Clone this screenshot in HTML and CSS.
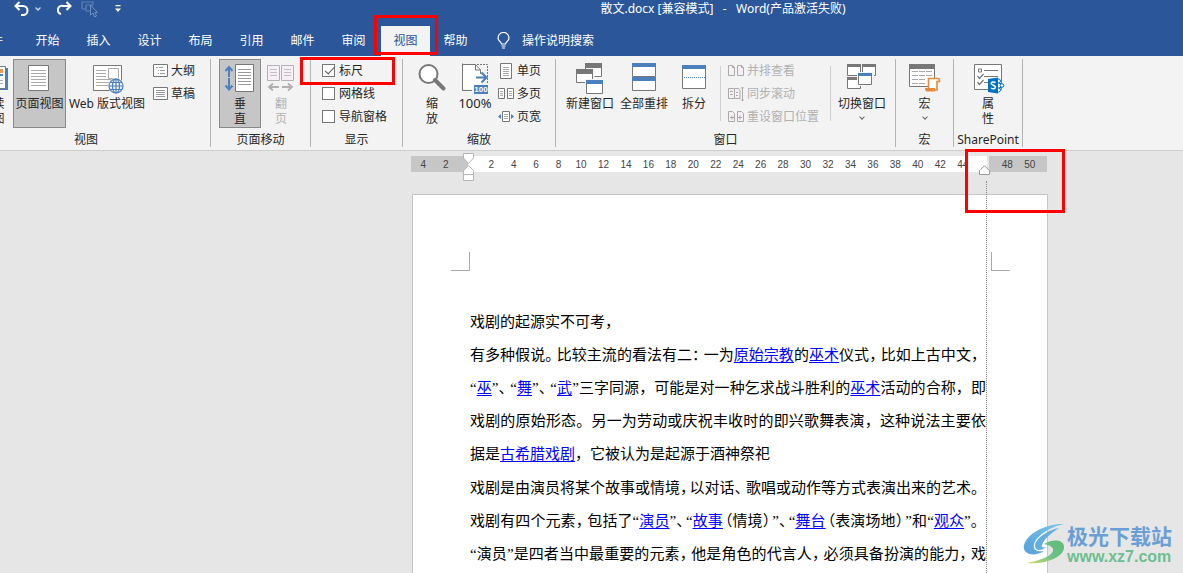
FILE: index.html
```html
<!DOCTYPE html>
<html lang="zh-CN">
<head>
<meta charset="utf-8">
<title>散文.docx - Word</title>
<link rel="stylesheet" href="styles.css">
</head>
<body>
<header class="titlebar">
  <div class="quick">
    <button class="qbtn" aria-label="撤消"><svg width="16" height="16" viewBox="0 0 16 16"><path d="M3 5h7a4 4 0 0 1 0 9H8M6.500 1 2.500 5l4 4" fill="none" stroke="#fff" stroke-width="2"/></svg></button>
    <button class="qbtn caret" aria-label="撤消列表"><svg width="6" height="4" viewBox="0 0 6 4"><path d="M.5.5 3 3 5.500.5" fill="none" stroke="#cdd9ec" stroke-width="1.300"/></svg></button>
    <button class="qbtn redo" aria-label="恢复"><svg width="16" height="16" viewBox="0 0 16 16"><path d="M13 5H6a4 4 0 0 0-2 8M9.500 1l4 4-4 4" fill="none" stroke="#fff" stroke-width="2"/></svg></button>
    <button class="qbtn select" aria-label="选择对象" disabled><svg width="17" height="18" viewBox="0 0 17 18"><path d="M1 9V2h11v3M1 9h4M5 5h7M5 5v6h4" fill="none" stroke="#5f82b8" stroke-width="1.200"/><path d="M9.500 5v10l2.500-2 1.500 4 2-1-1.500-3.500h2.500z" fill="#2b579a" stroke="#6f8fc0"/></svg></button>
    <button class="qbtn more" aria-label="自定义快速访问工具栏"><svg width="6" height="8" viewBox="0 0 6 8"><path d="M.5 0h5v1.200h-5zM0 3.500h6L3 7z" fill="#fff"/></svg></button>
  </div>
  <div class="title">散文.docx [兼容模式]&nbsp;&nbsp; -&nbsp;&nbsp; Word(产品激活失败)</div>
</header>
<nav class="tabs">
  <button class="tab file">文件</button>
  <button class="tab">开始</button>
  <button class="tab">插入</button>
  <button class="tab">设计</button>
  <button class="tab">布局</button>
  <button class="tab">引用</button>
  <button class="tab">邮件</button>
  <button class="tab">审阅</button>
  <div class="tab-wrap"><button class="tab active">视图</button><span class="mark mark-tab"></span></div>
  <button class="tab">帮助</button>
  <button class="tell"><svg width="13" height="17" viewBox="0 0 13 17"><path d="M4.500 12c0-2-3.500-3-3.500-6a5.300 5.300 0 0 1 11 0c0 3-3.500 4-3.500 6zM4.500 14h4M5 16h3" fill="none" stroke="#fff" stroke-width="1.200"/></svg><span>操作说明搜索</span></button>
</nav>

<section class="ribbon">
  <div class="group g-view">
    <div class="tools">
      <button class="big read"><svg width="32" height="32" viewBox="0 0 32 32"><path d="M8 4h23v22H8z" fill="#4a80bd"/><path d="M4.500 2.500h24v22h-24z" fill="#fff" stroke="#777"/><path d="M20 5h6v4h-6z" fill="#ed9b4e"/><path d="M20 10h6v2h-6z" fill="#4a80bd"/><path d="M7 7.500h10M7 10.500h10M7 13.500h10M7 16.500h19M7 19.500h19" stroke="#aaa"/></svg><span>阅读<br>视图</span></button>
      <button class="big page-view on"><svg width="31" height="32" viewBox="0 0 31 32"><path d="M4.500 1.500h20v25h-20z" fill="#fff" stroke="#777"/><path d="M7 6.500h15M7 9.500h15M7 12.500h15M7 15.500h15M7 18.500h15M7 21.500h15" stroke="#aaa"/></svg><span>页面视图</span></button>
      <button class="big web"><svg width="32" height="32" viewBox="0 0 32 32"><path d="M2.500 1.500h28v25h-28z" fill="#fff" stroke="#777"/><path d="M5 6.500h10M5 9.500h10M5 12.500h10M5 15.500h23M5 18.500h14M5 21.500h12" stroke="#aaa"/><path d="M17.500 4.500h10v10h-10z" fill="#fff" stroke="#aaa"/><circle cx="25" cy="22" r="8" fill="#f3f3f3"/><g fill="none" stroke="#4a80bd" stroke-width="1.200"><circle cx="25" cy="22" r="7"/><ellipse cx="25" cy="22" rx="3.500" ry="7"/><path d="M18 22h14M19 18.500h12M19 25.500h12M25 15v14"/></g></svg><span>Web 版式视图</span></button>
      <div class="smalls">
        <button class="small"><svg width="15" height="14" viewBox="0 0 15 14"><path d="M.5.500h14v12H.5z" fill="#fff" stroke="#777"/><path d="M3 3.500h2M6 3.500h4M5 6.500h1M7 6.500h5M5 9.500h1M7 9.500h5" stroke="#999"/></svg>大纲</button>
        <button class="small"><svg width="15" height="14" viewBox="0 0 15 14"><path d="M.5.500h14v12H.5z" fill="#fff" stroke="#777"/><path d="M3 3.500h9M3 5.500h9M3 7.500h9M3 9.500h9" stroke="#999"/></svg>草稿</button>
      </div>
    </div>
    <div class="caption">视图</div>
  </div>

  <div class="group g-move">
    <div class="tools">
      <button class="big vert on"><svg width="32" height="32" viewBox="0 0 32 32"><path d="M11.500.500h18v27h-18z" fill="#fff" stroke="#777"/><path d="M14 5.500h13M14 8.500h13M14 11.500h13M14 14.500h13M14 17.500h13M14 20.500h13" stroke="#999"/><path d="M5 14V4M1.500 7 5 3l3.500 4M5 14v11M1.500 21.500 5 25.500l3.500-4" fill="none" stroke="#4a80bd" stroke-width="2"/><path d="M3 13.500h4" stroke="#c6c6c6"/></svg><span>垂<br>直</span></button>
      <button class="big turn" disabled><svg width="28" height="32" viewBox="0 0 28 32"><path d="M.5 1.500h12v15H.5zM14.500 1.500h12v15h-12z" fill="#f6f0f6" stroke="#b5b0b5"/><path d="M3 5.500h7M3 8.500h7M3 11.500h7M17 5.500h7M17 8.500h7M17 11.500h7" stroke="#c4bfc4"/><path d="M12 23H2.500M6 19.500 2 23l4 3.500M15 23h9.500M21 19.500l4 3.500-4 3.500" fill="none" stroke="#b0b0b0" stroke-width="1.800"/></svg><span>翻<br>页</span></button>
    </div>
    <div class="caption">页面移动</div>
  </div>

  <div class="group g-show">
    <div class="tools">
      <div class="checks">
        <div class="check-row"><label class="check"><input type="checkbox" checked>标尺</label><span class="mark mark-check"></span></div>
        <div class="check-row"><label class="check"><input type="checkbox">网格线</label></div>
        <div class="check-row"><label class="check"><input type="checkbox">导航窗格</label></div>
      </div>
    </div>
    <div class="caption">显示</div>
  </div>

  <div class="group g-zoom">
    <div class="tools">
      <button class="big zoom"><svg width="30" height="32" viewBox="0 0 30 32"><circle cx="11.500" cy="10" r="9" fill="#fff" stroke="#777" stroke-width="2"/><path d="m18 16 8.500 8.500" stroke="#777" stroke-width="4" stroke-linecap="round"/></svg><span>缩<br>放</span></button>
      <button class="big percent"><svg width="28" height="32" viewBox="0 0 28 32"><path d="M1.500.500h14l5 5V25h-19z" fill="#fff"/><path d="M11 26.500H1.500V-.5M1.500.500h13l5 5.500h-5V.500M19.500 6v4" fill="none" stroke="#777"/><path d="M16 .5h10.500V20" fill="none" stroke="#777" stroke-dasharray="2 1"/><path d="M15 13.500h10M20.500 8.500l5 5-5 5" fill="none" stroke="#4a80bd" stroke-width="2"/><path d="M13 21h14v9H13z" fill="#4a80bd"/><text class="hundred" x="20" y="28">100</text></svg><span class="percent-label">100%</span></button>
      <div class="smalls">
        <button class="small"><svg width="16" height="16" viewBox="0 0 16 16"><path d="M2.500.500h11v15h-11z" fill="#fff" stroke="#777"/><path d="M5 4.500h6M5 6.500h6M5 8.500h6M5 10.500h6M5 12.500h6" stroke="#aaa"/></svg>单页</button>
        <button class="small"><svg width="16" height="12" viewBox="0 0 16 12"><path d="M.5.500h6v10h-6zM9.500.500h6v10h-6z" fill="#fff" stroke="#777"/><path d="M2 3.500h3M2 5.500h3M2 7.500h3M11 3.500h3M11 5.500h3M11 7.500h3" stroke="#aaa"/></svg>多页</button>
        <button class="small"><svg width="16" height="12" viewBox="0 0 16 12"><path d="M4.500.500h7v10h-7z" fill="#fff" stroke="#777"/><path d="M6 3.500h4M6 5.500h4M6 7.500h4" stroke="#aaa"/><path d="M3 3v5L0 5.500zM13 3v5l3-2.500z" fill="#4a80bd"/></svg>页宽</button>
      </div>
    </div>
    <div class="caption">缩放</div>
  </div>

  <div class="group g-window">
    <div class="tools">
      <button class="big"><svg width="28" height="32" viewBox="0 0 28 32"><path d="M9.500.500h16v12h-16z" fill="#fff" stroke="#777"/><path d="M9-1h17v5H9z" fill="#777"/><path d="M-.5 5h19v15h-19z" fill="#f3f3f3"/><path d="M.5 6.500h16v12H.5z" fill="#fff" stroke="#777"/><path d="M0 5h17v5H0z" fill="#777"/><path d="M9 15h19v16H9z" fill="#f3f3f3"/><path d="M10.500 17.500h16v12h-16z" fill="#fff" stroke="#777"/><path d="M10 16h17v4H10z" fill="#4a80bd"/></svg><span>新建窗口</span></button>
      <button class="big"><svg width="24" height="32" viewBox="0 0 24 32"><path d="M.5.500h23v12H.5zM.5 14.500h23v12H.5z" fill="#fff" stroke="#777"/><path d="M0-1h24v4H0zM0 13h24v4H0z" fill="#4a80bd"/></svg><span>全部重排</span></button>
      <button class="big split"><svg width="24" height="32" viewBox="0 0 24 32"><path d="M.5 1.500h23v23H.5z" fill="#fff" stroke="#777"/><path d="M0 1h24v4H0z" fill="#4a80bd"/><path d="M2 13.500h21" stroke="#4a80bd" stroke-dasharray="1 1"/></svg><span>拆分</span></button>
      <i class="divider"></i>
      <div class="smalls window-list">
        <button class="small" disabled><svg width="16" height="12" viewBox="0 0 16 12"><path d="M.5.500h4l2 2v8h-6zM9.500.500h4l2 2v8h-6z" fill="#f6f0f6" stroke="#aaa"/><path d="M4.500.500v2h2M13.500.500v2h2" fill="none" stroke="#aaa"/></svg>并排查看</button>
        <button class="small" disabled><svg width="16" height="16" viewBox="0 0 16 16"><path d="M6 2.500H.5v10H6M6.500 2.500h4l1.500 2v8H6.500z" fill="#f6f0f6" stroke="#aaa"/><path d="M2 5.500h3M2 8.500h3M8 6.500h2M8 9.500h2M14.500 1v14M13 2.500 14.500 1 16 2.500M13 13.500l1.500 1.500 1.500-1.500" fill="none" stroke="#aaa"/></svg>同步滚动</button>
        <button class="small" disabled><svg width="16" height="12" viewBox="0 0 16 12"><path d="M.5.500h4l2 2v8h-6zM9.500.500h4l2 2v8h-6z" fill="#f6f0f6" stroke="#aaa"/><path d="M2 6.500h4M4 4.500v4M10 6.500h4M12 4.500v4" stroke="#aaa"/></svg>重设窗口位置</button>
      </div>
      <i class="divider"></i>
      <button class="big switch"><svg width="30" height="32" viewBox="0 0 30 32"><path d="M.5.500h13v11H.5zM15.500.500h13v11h-13zM.5 13.500h13v11H.5z" fill="#fff" stroke="#777"/><path d="M0 0h14v3H0zM15 0h14v3H15zM0 13h14v3H0z" fill="#777"/><path d="M10 8h17v14H10z" fill="#f3f3f3"/><path d="M11.500 9.500h13v11h-13z" fill="#fff" stroke="#777"/><path d="M11 9h14v3H11z" fill="#4a80bd"/></svg><span>切换窗口</span><b class="down"></b></button>
    </div>
    <div class="caption">窗口</div>
  </div>

  <div class="group g-macro">
    <div class="tools">
      <button class="big"><svg width="31" height="32" viewBox="0 0 31 32"><path d="M.5.500h25v22H.5z" fill="#fff" stroke="#777"/><path d="M0 0h26v5H0z" fill="#777"/><path d="M3 7.500h6M10 7.500h6M17 7.500h6M3 11.500h6M10 11.500h6M17 11.500h6M3 15.500h6M10 15.500h6M3 19.500h6M10 19.500h6" stroke="#aaa"/><path d="M19.500 24V14.500H29c1 0 1.500 1 1.500 3H28V26h-9z" fill="#fff" stroke="#e58a3c" stroke-width="1.600"/><path d="M16 24h10v3.500h-8c-1.500 0-2-1.500-2-3.500z" fill="#e58a3c"/></svg><span>宏</span><b class="down"></b></button>
    </div>
    <div class="caption">宏</div>
  </div>

  <div class="group g-share">
    <div class="tools">
      <button class="big"><svg width="31" height="32" viewBox="0 0 31 32"><path d="M1.500.500h27v25h-27z" fill="#fff" stroke="#777"/><path d="M5.500 5h3v3h-3zM11 6.500h14M11 12.500h14M11 18.500h5" fill="none" stroke="#777"/><path d="m4.500 12 2 2.500 4-4.500M4.500 18l2 2.500 4-4.500" fill="none" stroke="#777" stroke-width="1.300"/><path d="m22 16 8 5.500-8 6" fill="#f3f3f3" stroke="#0072c6" stroke-width="1.500"/><circle cx="25.500" cy="17" r="2" fill="#fff" stroke="#0072c6"/><circle cx="29" cy="21.500" r="1.800" fill="#fff" stroke="#0072c6"/><circle cx="25.500" cy="26" r="2" fill="#fff" stroke="#0072c6"/><path d="m15 15 10-1.500v16L15 28z" fill="#0072c6"/><path d="M22.500 18.500c-2-1-4.300-.8-4.300.8 0 2 4.300 1.800 4.300 3.800 0 1.800-2.500 2-4.500 1" fill="none" stroke="#fff" stroke-width="1.500"/></svg><span>属<br>性</span></button>
    </div>
    <div class="caption">SharePoint</div>
  </div>
</section>

<main class="workspace">
  <div class="ruler">
    <div class="rule-left"><span>4</span><span>2</span></div>
    <div class="rule-mid"><span>2</span><span>4</span><span>6</span><span>8</span><span>10</span><span>12</span><span>14</span><span>16</span><span>18</span><span>20</span><span>22</span><span>24</span><span>26</span><span>28</span><span>30</span><span>32</span><span>34</span><span>36</span><span>38</span><span>40</span><span>42</span><span>44</span></div>
    <div class="rule-right"><span>48</span><span>50</span></div>
    <svg class="indent-left" width="11" height="29" viewBox="0 0 11 29"><path d="M.5.500h10V5L5.500 10.500.5 5zM5.500 12.500l5 5V27.500H.5V17.500zM.5 21.500h10" fill="#fff" stroke="#b5b5b5"/></svg>
    <svg class="indent-right" width="11" height="10" viewBox="0 0 11 10"><path d="m5.500.700 5 5V9.500H.5V5.700z" fill="#fff" stroke="#999"/></svg>
    <span class="mark mark-ruler"></span>
  </div>
  <article class="page">
    <div class="corners"><i class="corner tl"></i><i class="corner tr"></i></div>
    <div class="text">
      <p class="line end">戏剧的起源实不可考，</p>
      <p class="line">有多种假说<s class="t">。</s>比较主流的看法有二<s class="t">：</s>一为<a href="#">原始宗教</a>的<a href="#">巫术</a>仪式<s class="t">，</s>比如上古中文，</p>
      <p class="line">“<a href="#">巫</a>”<s class="t">、</s>“<a href="#">舞</a>”<s class="t">、</s>“<a href="#">武</a>”三字同源，可能是对一种乞求战斗胜利的<a href="#">巫术</a>活动的合称，即</p>
      <p class="line">戏剧的原始形态。另一为劳动或庆祝丰收时的即兴歌舞表演，这种说法主要依</p>
      <p class="line end">据是<a href="#">古希腊戏剧</a>，它被认为是起源于酒神祭祀</p>
      <p class="line para">戏剧是由演员将某个故事或情境<s class="tt">，</s>以对话<s class="t">、</s>歌唱或动作等方式表演出来的艺术。</p>
      <p class="line">戏剧有四个元素<s class="t">，</s>包括了“<a href="#">演员</a>”<s class="tt">、</s>“<a href="#">故事</a><s class="open">（</s>情境<s class="tt">）</s>”<s class="tt">、</s>“<a href="#">舞台</a><s class="open">（</s>表演场地<s class="tt">）</s>”和“<a href="#">观众</a>”。</p>
      <p class="line">“演员”是四者当中最重要的元素<s class="t">，</s>他是角色的代言人<s class="t">，</s>必须具备扮演的能力<s class="t">，</s>戏</p>
    </div>
  </article>
  <i class="guide"></i>
  <aside class="watermark">
    <svg width="44" height="42" viewBox="0 0 44 42"><defs><linearGradient id="sky" x1="0" y1="1" x2="1" y2="0"><stop offset="0" stop-color="#5a9fdc"/><stop offset="1" stop-color="#74c8ee"/></linearGradient><linearGradient id="leaf" x1="0" y1="1" x2="1" y2="0"><stop offset="0" stop-color="#d6de6a"/><stop offset=".5" stop-color="#6cc08a"/><stop offset="1" stop-color="#5fbd72"/></linearGradient></defs><path d="M41 1C25 0 4 10 1 22c-2 10 11 12 20 6-7 1-11-1-10-6C12 14 26 4 41 1z" fill="url(#sky)"/><path d="M36 5C23 8 12 16 12 23c0 5 7 5 11 1-3 1-5 0-4-2 2-6 9-12 17-17z" fill="#62aee2"/><path d="M21 21c10-6 21-4 20 4C40 35 20 42 3 40c11-2 25-6 27-12 1-4-4-6-9-7z" fill="url(#leaf)"/></svg>
    <div><div class="wm-name">极光下载站</div><div class="wm-url">www.xz7.com</div></div>
  </aside>
</main>
</body>
</html>
```
FILE: styles.css
```css
* { box-sizing: border-box; }
body {
  margin: 0;
  height: 100vh;
  overflow: hidden;
  display: flex;
  flex-direction: column;
  background: #e6e6e6;
  color: #262626;
  font: 12px/15px "Noto Sans", "Noto Sans CJK SC", sans-serif;
}
button {
  margin: 0;
  padding: 0;
  border: 0;
  background: none;
  color: inherit;
  font: inherit;
  white-space: nowrap;
}
svg { display: block; flex: none; }

/* Title bar and tabs */
.titlebar {
  display: grid;
  grid-template-columns: 263px 1fr;
  height: 26px;
  background: #2b579a;
  color: #fff;
}
.quick { display: flex; align-items: center; height: 17px; padding-left: 13px; }
.caret { margin-left: 6px; }
.redo { margin-left: 16px; }
.select { margin-left: 8px; }
.more { margin-left: 17px; }
.title { text-align: center; line-height: 18px; white-space: nowrap; }
.tabs {
  display: flex;
  height: 30px;
  padding-left: 22px;
  background: #2b579a;
  color: #fff;
}
.tab { width: 51px; height: 30px; padding-bottom: 2px; flex: none; }
.file { width: 62px; margin-left: -62px; }
.tab-wrap { position: relative; padding: 0 0 0 2px; }
.active { width: 49px; background: #f3f3f3; color: #2b579a; }
.tell { display: flex; align-items: center; gap: 12px; margin-left: 16px; padding-bottom: 2px; }

/* Red annotation frames */
.mark { position: absolute; border: 3px solid #fe0000; pointer-events: none; z-index: 5; }
.mark-tab { left: -5px; top: -11px; width: 64px; height: 40px; }
.mark-check { left: -22px; top: -2px; width: 95px; height: 28px; }
.mark-ruler { left: 554px; top: -7px; width: 100px; height: 64px; }

/* Ribbon */
.ribbon {
  display: flex;
  flex: none;
  height: 95px;
  padding: 3px 0;
  margin-left: -38px;
  background: #f3f3f3;
  border-bottom: 1px solid #cecece;
}
.group { flex: none; border-right: 1px solid #b4b4b4; }
.tools { display: flex; height: 69px; }
.caption { padding-top: 4px; text-align: center; }
.g-view { width: 249px; padding-left: 10px; }
.g-view .caption { margin-left: -10px; }
.g-move { width: 100px; }
.g-show { width: 92px; }
.g-zoom { width: 153px; }
.g-window { width: 340px; }
.g-macro { width: 58px; }
.g-share { width: 69px; }
.g-move .tools { padding-left: 8px; }
.g-zoom .tools { padding-left: 9px; }
.g-window .tools { padding-left: 7px; }
.g-macro .tools, .g-share .tools { justify-content: center; }
.big {
  display: flex;
  flex-direction: column;
  align-items: center;
  justify-content: flex-start;
  width: 54px;
  padding-top: 5px;
  flex: none;
}
.big svg { overflow: visible; }
.on { background: #c6c6c6; padding-top: 4px; border: 1px solid #8a8a8a; }
.read { width: 41px; }
.page-view { width: 53px; }
.web { width: 82px; }
.vert { width: 42px; }
.turn, .zoom, .split { width: 40px; }
.percent { width: 46px; }
.percent-label { font-size: 13px; }
.split { margin: 0 6px 0 3px; }
.switch { width: 62px; }
button:disabled { color: #b1b1b1; }
.down {
  width: 4px;
  height: 4px;
  margin-top: 4px;
  border: solid #666;
  border-width: 0 1px 1px 0;
  rotate: 45deg;
}
.hundred { font: bold 8px "Liberation Sans", sans-serif; fill: #fff; text-anchor: middle; }
.smalls { display: flex; flex-direction: column; margin-left: 5px; }
.small { display: flex; align-items: center; gap: 3px; height: 23px; }
.g-zoom .smalls { margin-left: 0; }
.divider { width: 1px; height: 55px; margin-top: 7px; background: #cfcfcf; }
.window-list { width: 104px; padding-left: 2px; }
.checks { padding-left: 11px; }
.check-row { position: relative; height: 23px; }
.check { display: flex; align-items: center; gap: 4px; height: 23px; }
.check input {
  appearance: none;
  width: 13px;
  height: 13px;
  margin: 0;
  border: 1px solid #777;
  background: #fff;
}
.check input:checked::after {
  content: "";
  display: block;
  width: 4px;
  height: 8px;
  margin: 0 0 0 4px;
  border: solid #555;
  border-width: 0 1px 1px 0;
  rotate: 42deg;
}

/* Ruler */
.workspace {
  position: relative;
  display: flex;
  flex-direction: column;
  flex: 1;
  min-height: 0;
  overflow: clip;
  overflow-clip-margin: 10px;
  padding: 5px 0 0 411px;
}
.ruler {
  position: relative;
  display: flex;
  flex: none;
  width: 636px;
  height: 16px;
  font: 10px/17px "Liberation Sans", sans-serif;
  color: #444;
}
.ruler span { flex: 1; text-align: center; }
.rule-left { display: flex; width: 57px; padding: 0 11px 0 1px; background: #c6c6c6; }
.rule-mid { display: flex; width: 519px; padding: 0 13px 0 12px; background: #fff; }
.rule-right { display: flex; width: 58px; margin-left: 2px; padding: 0 6px 0 7px; background: #c6c6c6; }
.indent-left { position: absolute; left: 52px; top: -3px; }
.indent-right { position: absolute; left: 568px; top: 9px; }
.guide { position: absolute; left: 986px; top: 30px; bottom: 0; border-left: 1px dotted #888; }

/* Document page */
.page {
  flex: 1;
  min-height: 0;
  width: 636px;
  margin: 22px 0 0 1px;
  padding: 57px 37px 0 38px;
  background: #fff;
  border: 1px solid #c6c6c6;
  border-bottom: 0;
}
.corners { display: flex; justify-content: space-between; }
.corner { width: 19px; height: 19px; border: 0 solid #aaa; border-bottom-width: 1px; }
.tl { border-right-width: 1px; }
.tr { border-left-width: 1px; }
.text {
  width: 516px;
  margin: 35px 0 0 19px;
  color: #000;
  font: 15px/33px "Liberation Serif", "Noto Sans CJK SC", sans-serif;
  text-spacing-trim: space-all;
}
.line { margin: 0; height: 33px; white-space: nowrap; text-align: justify; text-align-last: justify; }
.end { text-align-last: left; }
.para { margin-top: 1px; }
.line a { color: #0000ff; text-underline-offset: 2px; }
.line s { text-decoration: none; font-feature-settings: "halt"; }
.t { margin-right: 4px; }
.tt { margin-right: 2px; }
.open { margin-left: 2px; }

/* Site watermark */
.watermark { position: absolute; right: 11px; bottom: 7px; display: flex; align-items: center; }
.wm-name { font: bold 21px/26px "Noto Sans CJK SC", sans-serif; color: #6a9fd6; }
.wm-url { font: bold 16px/18px "Liberation Sans", sans-serif; color: #6cbf90; }
```
